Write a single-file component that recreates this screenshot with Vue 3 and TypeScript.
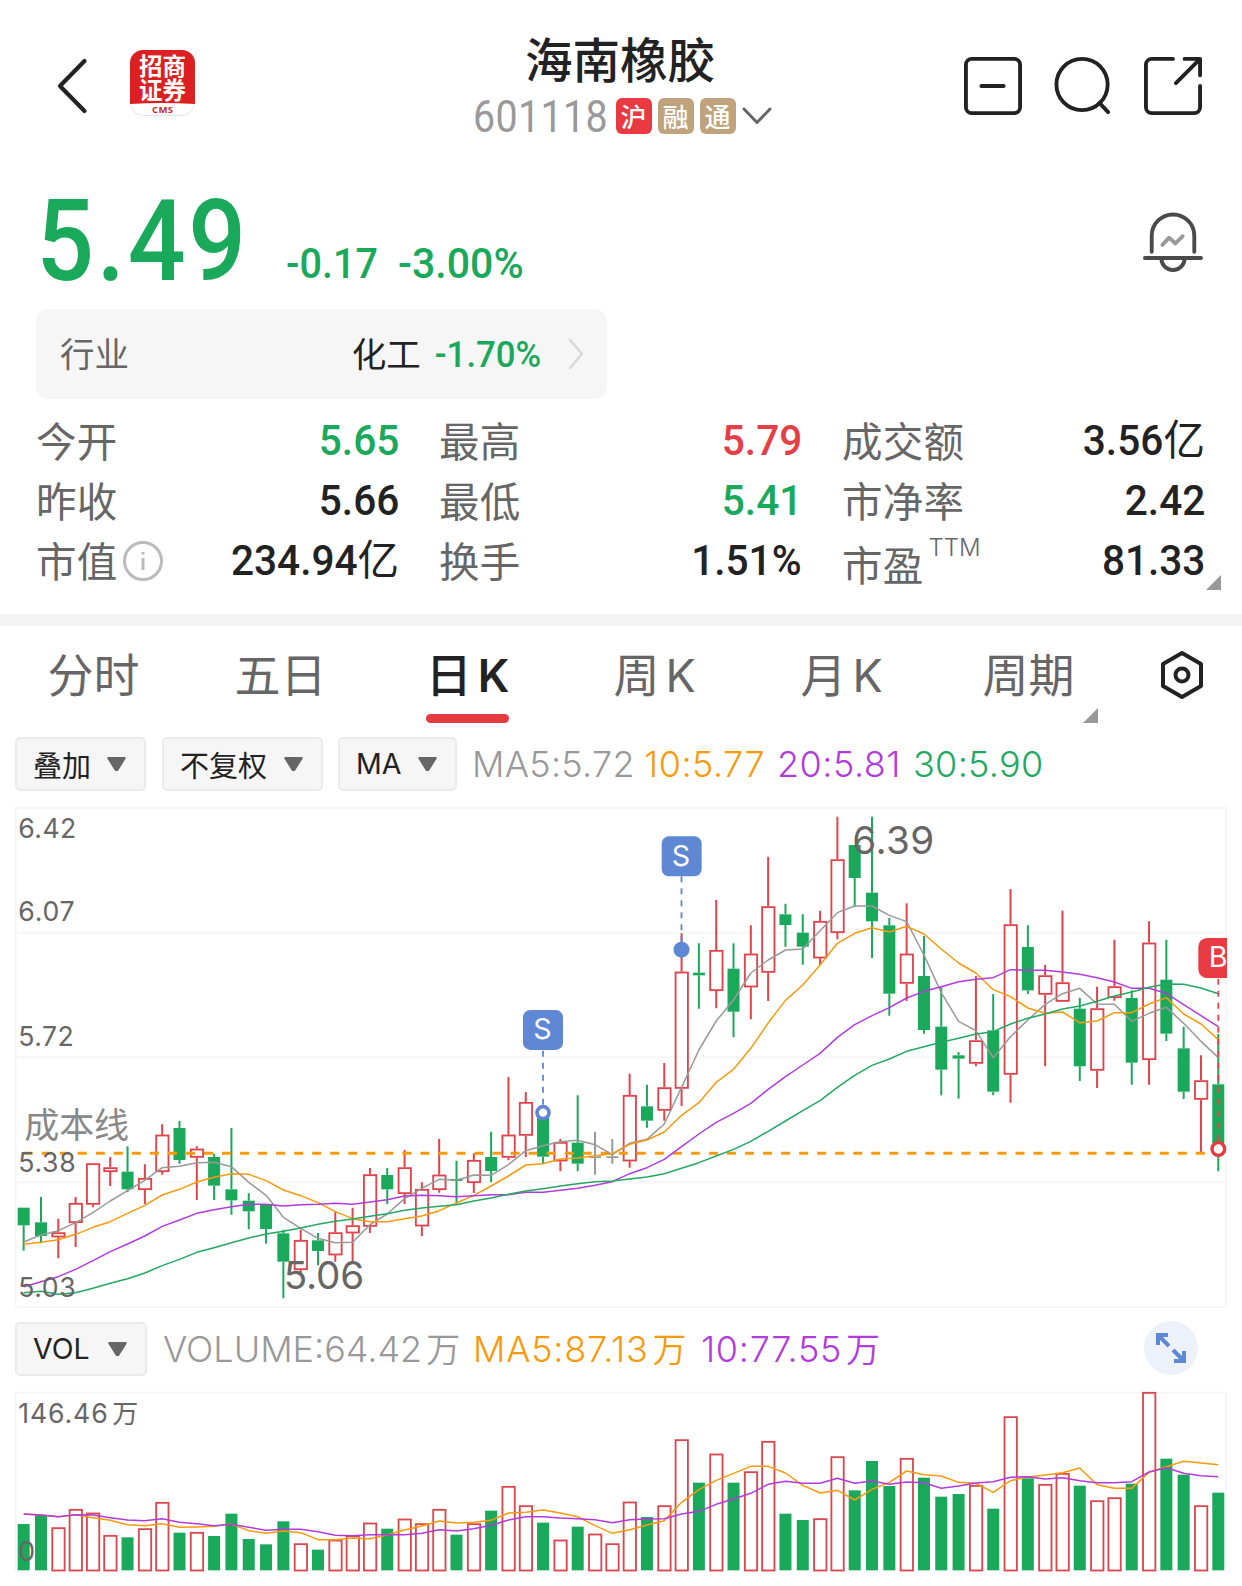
<script setup lang="ts">
type Dir = 'G' | 'R' | 'N'
type Candle = [Dir, number, number, number, number]

interface Stat { label: string; value: string; unit?: string; tone?: 'up' | 'down'; info?: boolean; sup?: string }

const stats: Stat[] = [
  { label: '今开', value: '5.65', tone: 'down' },
  { label: '最高', value: '5.79', tone: 'up' },
  { label: '成交额', value: '3.56', unit: '亿' },
  { label: '昨收', value: '5.66' },
  { label: '最低', value: '5.41', tone: 'down' },
  { label: '市净率', value: '2.42' },
  { label: '市值', value: '234.94', unit: '亿', info: true },
  { label: '换手', value: '1.51%' },
  { label: '市盈', value: '81.33', sup: 'TTM' },
]

const tabs = [
  { zh: '分时', k: false, on: false },
  { zh: '五日', k: false, on: false },
  { zh: '日', k: true, on: true },
  { zh: '周', k: true, on: false },
  { zh: '月', k: true, on: false },
  { zh: '周期', k: false, on: false },
]

// Chart space is three units per pixel: [direction, high, body top, body bottom, low]
const candles: Candle[] = [
  ['G', 1223, 1223, 1276, 1352], ['G', 1191, 1267, 1308, 1330], ['R', 1256, 1297, 1312, 1375], ['R', 1191, 1209, 1269, 1341],
  ['R', 1090, 1090, 1214, 1222], ['R', 1071, 1102, 1116, 1158], ['G', 1039, 1115, 1168, 1177], ['R', 1093, 1134, 1170, 1212],
  ['R', 973, 1004, 1116, 1124], ['G', 963, 984, 1080, 1091], ['R', 1039, 1046, 1073, 1200], ['G', 1061, 1071, 1157, 1200],
  ['G', 984, 1168, 1201, 1244], ['G', 1180, 1202, 1234, 1288], ['G', 1213, 1213, 1287, 1331], ['G', 1289, 1300, 1385, 1495],
  ['R', 1289, 1320, 1410, 1418], ['G', 1299, 1321, 1353, 1396], ['R', 1236, 1297, 1366, 1385], ['R', 1223, 1276, 1300, 1388],
  ['R', 1104, 1123, 1280, 1299], ['G', 1104, 1125, 1168, 1212], ['R', 1050, 1102, 1182, 1212], ['R', 1147, 1167, 1279, 1309],
  ['R', 1017, 1124, 1170, 1178], ['G', 1082, 1137, 1143, 1212], ['R', 1060, 1080, 1149, 1179], ['G', 995, 1071, 1113, 1147],
  ['R', 831, 1004, 1073, 1081], ['R', 876, 906, 1007, 1071], ['G', 930, 940, 1070, 1091], ['R', 1017, 1026, 1084, 1114],
  ['G', 886, 1028, 1091, 1114], ['N', 995, 1069, 1074, 1124], ['N', 1017, 1069, 1074, 1091], ['R', 821, 885, 1084, 1103],
  ['G', 854, 919, 962, 983], ['R', 789, 862, 932, 962], ['R', 400, 515, 866, 918], ['G', 430, 518, 526, 626],
  ['R', 300, 450, 573, 625], ['G', 430, 506, 635, 712], ['R', 376, 461, 562, 658], ['R', 170, 319, 518, 603],
  ['G', 311, 343, 375, 440], ['G', 343, 398, 440, 494], ['R', 332, 363, 475, 495], ['R', 50, 178, 399, 418],
  ['G', 135, 135, 234, 320], ['G', 50, 278, 364, 474], ['G', 354, 376, 581, 647], ['R', 310, 461, 551, 603],
  ['G', 408, 528, 690, 701], ['G', 562, 680, 809, 886], ['G', 756, 766, 776, 896], ['R', 528, 721, 791, 799],
  ['G', 582, 691, 875, 886], ['R', 267, 373, 824, 908], ['G', 376, 441, 571, 582], ['R', 495, 526, 584, 799],
  ['R', 332, 547, 605, 605], ['G', 593, 626, 799, 843], ['R', 560, 625, 812, 864], ['R', 419, 559, 594, 602],
  ['G', 571, 594, 788, 854], ['R', 364, 428, 780, 854], ['G', 419, 539, 701, 723], ['G', 680, 745, 875, 897],
  ['R', 766, 841, 899, 1056], ['G', 702, 853, 1030, 1114],
]

const averages: { color: string; points: number[] }[] = [
  { color: '#999999', points: [1326, 1305, 1292, 1268, 1238, 1203, 1172, 1141, 1103, 1099, 1088, 1087, 1100, 1147, 1186, 1252, 1285, 1315, 1328, 1327, 1274, 1242, 1196, 1165, 1138, 1141, 1125, 1126, 1094, 1052, 1037, 1025, 1021, 1034, 1064, 1030, 1018, 972, 862, 750, 663, 600, 519, 480, 450, 447, 392, 338, 318, 318, 346, 365, 465, 578, 664, 692, 773, 710, 660, 613, 581, 565, 612, 613, 664, 640, 622, 670, 724, 773] },
  { color: '#f79a0c', points: [1333, 1327, 1319, 1303, 1282, 1265, 1240, 1216, 1185, 1168, 1146, 1132, 1121, 1123, 1142, 1170, 1187, 1208, 1235, 1256, 1265, 1265, 1256, 1248, 1232, 1209, 1186, 1158, 1128, 1095, 1091, 1077, 1074, 1067, 1061, 1033, 1020, 996, 946, 908, 847, 808, 745, 669, 601, 555, 495, 430, 400, 383, 396, 379, 402, 447, 489, 519, 569, 590, 624, 640, 636, 668, 663, 638, 638, 612, 593, 642, 672, 719] },
  { color: '#b13bdc', points: [1460, 1445, 1430, 1408, 1382, 1355, 1332, 1308, 1279, 1260, 1240, 1229, 1220, 1213, 1213, 1218, 1214, 1213, 1210, 1213, 1206, 1199, 1188, 1186, 1187, 1190, 1187, 1184, 1184, 1177, 1177, 1171, 1165, 1156, 1145, 1121, 1103, 1078, 1040, 1002, 967, 940, 910, 868, 830, 795, 760, 712, 674, 647, 623, 594, 574, 560, 545, 538, 533, 509, 511, 511, 516, 523, 533, 546, 565, 565, 580, 614, 647, 680] },
  { color: '#22a861', points: [1478, 1474, 1483, 1478, 1465, 1450, 1436, 1419, 1397, 1378, 1357, 1343, 1328, 1314, 1302, 1294, 1284, 1273, 1264, 1257, 1249, 1241, 1231, 1224, 1219, 1214, 1203, 1194, 1183, 1173, 1166, 1158, 1151, 1145, 1143, 1137, 1131, 1121, 1105, 1088, 1068, 1048, 1024, 994, 963, 932, 902, 862, 826, 796, 777, 754, 740, 727, 715, 702, 695, 672, 655, 642, 627, 618, 604, 588, 576, 562, 552, 553, 564, 581] },
]

const volumeTops: number[] = [642, 615, 652, 597, 608, 675, 682, 655, 576, 668, 666, 678, 611, 687, 703, 634, 700, 719, 689, 676, 638, 656, 626, 640, 597, 674, 640, 602, 528, 586, 638, 689, 650, 671, 700, 575, 621, 586, 388, 518, 431, 518, 484, 393, 611, 630, 625, 439, 541, 453, 528, 444, 503, 560, 552, 525, 596, 319, 505, 522, 489, 527, 571, 562, 521, 246, 446, 494, 586, 548]

const volumeAverages: { color: string; points: number[] }[] = [
  { color: '#f79a0c', points: [612, 615, 620, 614, 623, 631, 644, 647, 641, 652, 651, 649, 642, 662, 670, 663, 668, 689, 689, 684, 686, 675, 660, 648, 633, 639, 637, 631, 609, 607, 600, 609, 620, 647, 670, 659, 645, 632, 577, 539, 511, 490, 469, 469, 489, 526, 549, 541, 570, 538, 517, 483, 494, 498, 517, 520, 547, 512, 501, 495, 488, 474, 524, 535, 535, 487, 470, 454, 459, 464] },
  { color: '#b13bdc', points: [612, 615, 620, 614, 615, 623, 630, 632, 626, 637, 641, 647, 643, 652, 661, 658, 658, 665, 676, 677, 674, 674, 674, 670, 659, 663, 656, 646, 630, 620, 620, 624, 626, 629, 638, 629, 627, 626, 612, 604, 583, 567, 550, 523, 514, 520, 520, 505, 520, 513, 523, 516, 518, 535, 528, 519, 515, 502, 500, 507, 503, 512, 518, 518, 515, 486, 473, 490, 497, 500] },
]

const axis = [
  { t: '6.42', y: 115, w: 168 },
  { t: '6.07', y: 363, w: 163 },
  { t: '5.72', y: 739, w: 160 },
  { t: '5.38', y: 1116, w: 166 },
  { t: '5.03', y: 1492, w: 166 },
]

const cx = (i: number): number => 71 + i * 51.94
const path = (p: number[]): string => p.map((y, i) => `${cx(i).toFixed(1)},${y}`).join(' ')
const tone: Record<Dir, string> = { G: '#1aa85b', R: '#e0434a', N: '#999999' }
</script>

<template>
  <main class="page">
    <header class="head">
      <div class="side left">
        <svg class="back" width="34" height="60" viewBox="0 0 34 60"><path d="M28.500 5 4 30 28.500 55" /></svg>
        <svg class="logo" width="65" height="66" viewBox="0 0 65 66">
          <rect class="plate" x=".5" y=".5" width="64" height="65" rx="13" />
          <path class="field" d="M0 54V13A13 13 0 0 1 13 0H52A13 13 0 0 1 65 13V54Q32 52 0 54Z" />
          <text x="32.500" y="24.500">招商</text><text x="32.500" y="48.500">证券</text>
          <text class="cms" x="32.500" y="63" textLength="21">CMS</text>
        </svg>
      </div>
      <div class="title">
        <h1>海南橡胶</h1>
        <div class="code">
          <span class="num">601118</span>
          <em class="red">沪</em><em>融</em><em>通</em>
          <svg width="30" height="18" viewBox="0 0 30 18"><path d="M2 2 15 15.500 28 2" /></svg>
        </div>
      </div>
      <div class="side right">
        <svg width="58" height="58" viewBox="0 0 60 60"><rect x="2" y="2" width="56" height="56" rx="6" /><path d="M18 30H41" /></svg>
        <svg width="58" height="58" viewBox="0 0 60 60"><circle cx="29" cy="28.500" r="26.500" /><path d="M47 47.500 56 57" /></svg>
        <svg width="58" height="58" viewBox="0 0 60 60"><path d="M30 2H8a6 6 0 0 0-6 6V52a6 6 0 0 0 6 6H52a6 6 0 0 0 6-6V30M42 2H58V19M57 3 33 27" /></svg>
      </div>
    </header>

    <section class="quote">
      <div class="prices"><strong>5.49</strong><span class="chg">-0.17</span><span class="pct">-3.00%</span></div>
      <svg class="bell" width="60" height="62" viewBox="0 0 62 64">
        <path d="M9 41V24.500a22 22 0 0 1 44 0V41M2 47.500H60M19 48a12 12 0 0 0 24 0" />
        <path class="wave" d="M20 34 27 26.500 33.500 32.500 41 25" />
      </svg>
    </section>

    <section class="industry">
      <span class="lab">行业</span><span class="name">化工</span><span class="ipct">-1.70%</span>
      <svg width="16" height="32" viewBox="0 0 16 32"><path d="M2 2 14 16 2 30" /></svg>
    </section>

    <section class="stats">
      <div v-for="s in stats" :key="s.label" class="stat">
        <span class="lab" :class="{ low: s.sup }">{{ s.label }}</span>
        <svg v-if="s.info" class="info" width="40" height="40" viewBox="0 0 40 40"><circle cx="20" cy="20" r="18.500" /><path d="M20 17V29M20 11V13.500" /></svg>
        <sup v-if="s.sup">{{ s.sup }}</sup>
        <span class="val" :class="s.tone"><b>{{ s.value }}</b><u v-if="s.unit">{{ s.unit }}</u></span>
      </div>
      <i class="corner"></i>
    </section>

    <nav class="tabs">
      <div v-for="t in tabs" :key="t.zh" class="tab" :class="{ on: t.on }">{{ t.zh }}<span v-if="t.k">K</span></div>
      <svg class="hex" width="46" height="50" viewBox="0 0 46 50"><path d="M23 3 42 14V36L23 47 4 36V14Z" /><circle cx="23" cy="25" r="6.500" /></svg>
      <i class="corner"></i>
    </nav>

    <section class="tools">
      <button class="w1">叠加<i></i></button><button class="w2">不复权<i></i></button><button class="w3"><span>MA</span><i></i></button>
      <span class="lg m1">MA5:5.72</span><span class="lg m2">10:5.77</span><span class="lg m3">20:5.81</span><span class="lg m4">30:5.90</span>
    </section>

    <svg class="kline" width="1242" height="520" viewBox="0 0 3726 1560">
      <g class="grid">
        <rect x="47" y="24" width="3632" height="1498" />
        <path d="M47 398H3679M47 772H3679M47 1147H3679" />
      </g>
      <text class="cost" x="73" y="1013" textLength="314">成本线</text>
      <g v-for="(c, i) in candles" :key="i" :stroke="tone[c[0]]">
        <path :d="`M${cx(i)} ${c[1]}V${c[2]}M${cx(i)} ${c[3]}V${c[4]}`" stroke-width="6" />
        <rect v-if="c[0] === 'R'" :x="cx(i) - 18" :y="c[2] + 2.500" width="37" :height="Math.max(5, c[3] - c[2] - 5)" fill="none" stroke-width="5.500" />
        <rect v-else :x="cx(i) - 18" :y="c[2]" width="36" :height="c[3] - c[2]" :fill="tone[c[0]]" stroke="none" />
      </g>
      <path d="M71 1060H3650" class="costline" />
      <polyline v-for="m in averages" :key="m.color" :points="path(m.points)" :stroke="m.color" class="ma" />
      <text v-for="a in axis" :key="a.t" class="ax" x="55" :y="a.y" :textLength="a.w + 6">{{ a.t }}</text>
      <text class="peak" x="851" y="1468" textLength="242">5.06</text>
      <text class="peak" x="2557" y="162" textLength="246">6.39</text>

      <g class="sell">
        <path d="M1629 752V916M2044.500 229V430" />
        <rect x="1569" y="630" width="120" height="120" rx="22" /><text x="1627" y="717">S</text>
        <rect x="1985" y="109" width="120" height="120" rx="22" /><text x="2043" y="197">S</text>
        <circle cx="1629" cy="938" r="18" class="ring" /><circle cx="2044.500" cy="449" r="24" />
      </g>
      <g class="buy">
        <path d="M3655 536V1025" class="buyline" />
        <path d="M3681 414H3621a26 26 0 0 0-26 26V508a26 26 0 0 0 26 26H3681Z" class="flag" />
        <text x="3654" y="501">B</text>
        <path d="M3681 400H3726V560H3681Z" class="mask" />
        <circle cx="3655" cy="1047" r="19" class="ring" />
      </g>
    </svg>

    <section class="tools vol">
      <button class="w4"><span>VOL</span><i></i></button>
      <span class="lg v1">VOLUME:64.42<u>万</u></span><span class="lg v2">MA5:87.13<u>万</u></span><span class="lg v3">10:77.55<u>万</u></span>
      <div class="expand"><svg width="32" height="32" viewBox="0 0 32 32"><path d="M14 14 4 4M18 18 28 28" /><path d="M3 13V3H13M19 29H29V19" /></svg></div>
    </section>

    <svg class="kline" width="1242" height="206" viewBox="0 210 3726 618">
      <path class="grid" d="M47 784V248H3679V784" />
      <g v-for="(t, i) in volumeTops" :key="i">
        <rect v-if="candles[i][0] === 'G'" :x="cx(i) - 18" :y="t" width="36" :height="781 - t" fill="#1aa85b" />
        <rect v-else :x="cx(i) - 18" :y="t + 2.500" width="37" :height="779 - t" fill="none" stroke="#d9484e" stroke-width="5.500" />
      </g>
      <polyline v-for="m in volumeAverages" :key="m.color" :points="path(m.points)" :stroke="m.color" class="ma" />
      <text class="ax" x="55" y="340" textLength="268">146.46</text><text class="ax wan" x="337" y="340">万</text>
      <text class="ax" x="55" y="754">0</text>
    </svg>
  </main>
</template>

<style>
body { background: #fff; }
</style>

<style scoped>
.page { width: 1242px; height: 1586px; overflow: hidden; background: #fff; color: #222; font-family: Roboto, "Noto Sans CJK SC", sans-serif; }
svg { display: block; flex: none; }
h1, em, i, u { font-style: normal; text-decoration: none; margin: 0; }
.head { height: 170px; display: flex; justify-content: space-between; box-sizing: border-box; padding: 0 40px 0 56px; }
.side { width: 300px; display: flex; }
.back { margin-top: 56px; fill: none; stroke: #222; stroke-width: 4.2; stroke-linecap: round; stroke-linejoin: round; }
.logo { margin: 50px 0 0 40px; }
.logo .plate { fill: #fff; stroke: #e4e4e4; stroke-width: 1; }
.logo .field { fill: #dc1f20; }
.logo text { font: 700 23.500px "Noto Sans CJK SC", sans-serif; fill: #fff; text-anchor: middle; }
.logo .cms { font: 700 9.500px "Open Sans", sans-serif; fill: #c72b2b; }
.title { display: flex; flex-direction: column; align-items: center; padding-right: 14px; }
h1 { font: 500 47.500px/60px "Noto Sans CJK SC", sans-serif; margin-top: 28px; height: 60px; padding-right: 4px; }
.code { display: flex; align-items: center; height: 56px; }
.num { font-size: 45px; color: #999; letter-spacing: .4px; width: 143px; line-height: 56px; transform: scaleX(.875) translateY(1px); transform-origin: 0 50%; white-space: nowrap; }
.code em { width: 36px; height: 36px; border-radius: 6px; background: #bfa37c; color: #fff; font: 500 26px/35px "Noto Sans CJK SC", sans-serif; text-align: center; margin-right: 6px; }
.code em.red { background: #eb3941; }
.code svg { fill: none; stroke: #666; stroke-width: 3; stroke-linecap: round; stroke-linejoin: round; }
.right { justify-content: flex-end; gap: 32px; padding-top: 57px; fill: none; stroke: #222; stroke-width: 4; stroke-linecap: round; stroke-linejoin: round; }
.quote { height: 138px; display: flex; justify-content: space-between; align-items: flex-start; padding: 0 39px 0 38px; }
.prices { display: flex; align-items: baseline; color: #1aa85b; height: 138px; font-weight: 500; }
.prices strong { font-size: 113px; font-weight: 500; line-height: 143px; letter-spacing: 3px; width: 248px; transform: scaleX(.9) translateX(-2px); transform-origin: 0 50%; }
.chg { font-size: 43px; width: 112px; transform: scaleX(.92) translateY(-2px); transform-origin: 0 50%; }
.pct { font-size: 43px; transform: scaleX(.955) translateY(-2px); transform-origin: 0 50%; }
.bell { margin-top: 42px; fill: none; stroke: #4a4a4a; stroke-width: 4; stroke-linecap: round; stroke-linejoin: round; }
.wave { stroke: #999; }
.industry { width: 571px; height: 90px; box-sizing: border-box; margin-left: 36px; margin-top: 1px; border-radius: 12px; background: #f6f6f6; display: flex; align-items: center; padding: 0 23px 0 24px; font-size: 34.500px; }
.industry .lab { flex: 1; }
.industry .lab, .industry .name { margin-top: -4px; }
.lab { color: #666; }
.name { margin-right: 7px; }
.ipct { color: #1aa85b; font-size: 37px; font-weight: 500; transform: scaleX(.94); transform-origin: 100% 50%; }
.industry svg { margin-left: 27px; fill: none; stroke: #d8d8d8; stroke-width: 2.500; stroke-linecap: round; stroke-linejoin: round; }
.stats { position: relative; display: grid; grid-template-columns: repeat(3, 363px); column-gap: 40px; grid-auto-rows: 60px; margin: 12px 36px 0; height: 203px; }
.stat { display: flex; align-items: center; font-size: 40.500px; line-height: 60px; }
.stat .lab { padding-top: 3px; letter-spacing: .2px; }
.stat .lab.low { padding-top: 11px; }
.stat sup { font: 300 24px/30px Inter, sans-serif; color: #666; align-self: flex-start; margin: 2px 0 0 5px; }
.info { margin-left: 6px; fill: none; stroke: #bbb; stroke-width: 3; }
.val { margin-left: auto; font-size: 42.500px; }
.val b { display: inline-block; font-weight: 500; transform: scaleX(.955); transform-origin: 100% 50%; }
.val u { font-weight: 400; font-size: 41.500px; }
.up { color: #e63e46; } .down { color: #1aa85b; }
.corner { position: absolute; width: 15px; height: 15px; background: #999; clip-path: polygon(100% 0, 100% 100%, 0 100%); }
.stats .corner { right: -15px; top: 164px; }
.tabs { position: relative; height: 111px; box-sizing: border-box; border-top: 12px solid #f4f4f4; display: flex; padding-left: 0; }
.tab { position: relative; width: 187px; text-align: center; font-size: 46px; line-height: 100px; color: #666; white-space: nowrap; }
.tab span { font-family: Inter, sans-serif; margin-left: 6px; font-size: 45px; }
.tab.on { color: #222; font-weight: 500; } .tab.on span { font-weight: 600; }
.tab.on::after { content: ""; position: absolute; left: 52px; top: 88px; width: 83px; height: 9px; border-radius: 5px; background: #e63a41; }
.hex { margin: 24px 0 0 37px; fill: none; stroke: #222; stroke-width: 4; stroke-linejoin: round; }
.tabs .corner { left: 1083px; top: 82px; }
.tools { height: 75px; box-sizing: border-box; padding-top: 12px; display: flex; align-items: flex-start; padding-left: 15px; }
button { height: 54px; box-sizing: border-box; border: 2px solid #ebebeb; border-radius: 5px; background: #f6f6f6; padding: 0 17px 0 16px; display: flex; align-items: center; justify-content: space-between; font: 400 29px/50px "Noto Sans CJK SC", sans-serif; color: #222; flex: none; margin-right: 16px; }
button span { font-family: Inter, sans-serif; font-size: 28.500px; line-height: 52px; }
button i { width: 19px; height: 14px; background: #666; clip-path: polygon(0 8%, 6% 0, 94% 0, 100% 8%, 57% 100%, 43% 100%); margin-right: 1px; }
.w1 { width: 131px; } .w2 { width: 161px; margin-right: 15px; } .w3 { width: 119px; margin-right: 15px; } .w4 { width: 132px; }
.lg { font: 350 36px/54px Inter, "Noto Sans CJK SC", sans-serif; white-space: nowrap; flex: none; letter-spacing: .3px; }
.lg u { font-size: 34px; margin-left: 4px; letter-spacing: 0; }
.m1 { width: 172px; color: #999; } .m2 { width: 133px; color: #f79a0c; letter-spacing: .5px; } .m3 { width: 136px; color: #b13bdc; letter-spacing: .5px; } .m4 { color: #22a861; }
.vol { height: 60px; padding-top: 2px; }
.v1 { width: 310px; color: #999; letter-spacing: 0; } .v2 { width: 228px; color: #f79a0c; letter-spacing: .75px; } .v3 { width: 443px; color: #b13bdc; letter-spacing: .7px; }
.expand { width: 54px; height: 54px; margin-top: -1px; border-radius: 50%; background: #edf2fa; display: flex; align-items: center; justify-content: center; fill: none; stroke: #5e87d4; stroke-width: 4; }
.kline { overflow: hidden; fill: none; }
.grid, .grid * { fill: none; stroke: #f5f5f5; stroke-width: 5; }
.ma { fill: none; stroke-width: 4.5; stroke-linejoin: round; }
.ax { font: 400 80px Inter, "Noto Sans CJK SC", sans-serif; fill: #666; }
.wan { font-size: 78px; }
.cost { font: 400 105px "Noto Sans CJK SC", sans-serif; fill: #888; }
.peak { font: 400 116px Inter, sans-serif; fill: #666; }
.costline { stroke: #f79a0c; stroke-width: 9; stroke-dasharray: 27 27.1; }
.sell rect, .sell circle { fill: #5e87d4; }
.sell path { stroke: #5e87d4; stroke-width: 5.500; stroke-dasharray: 18; }
.sell text, .buy text { font: 400 86px Inter, sans-serif; fill: #fff; text-anchor: middle; }
.sell .ring { fill: #fff; stroke: #5e87d4; stroke-width: 11; }
.buyline { stroke: #e0434a; stroke-width: 5.500; stroke-dasharray: 18; }
.flag { fill: #e93b42; }
.mask { fill: #fff; }
.buy .ring { fill: #fff; stroke: #e63a41; stroke-width: 10; }
</style>
